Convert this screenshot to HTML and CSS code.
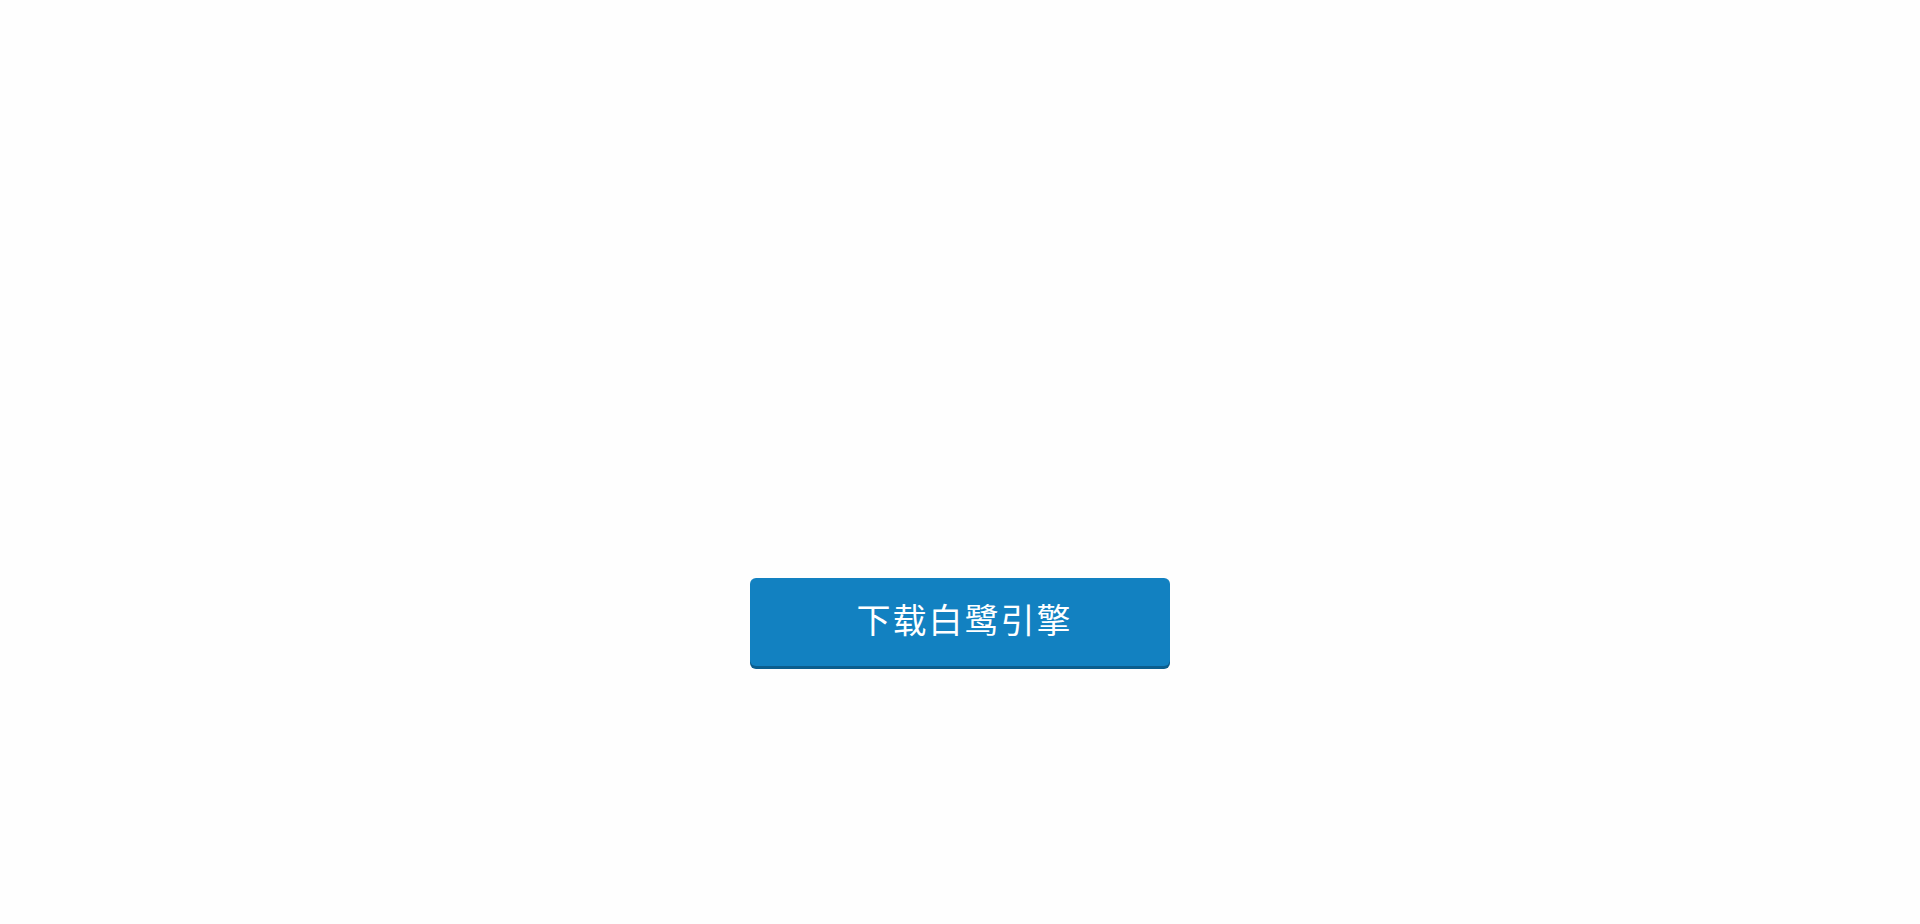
FILE: index.html
```html
<!DOCTYPE html>
<html lang="zh-CN">
<head>
<meta charset="utf-8">
<title>下载白鹭引擎</title>
<link rel="stylesheet" href="styles.css">
</head>
<body>
<main class="page">
  <a class="download-btn" href="#">下载白鹭引擎</a>
</main>
</body>
</html>
```

FILE: styles.css
```css
html, body {
  margin: 0;
  padding: 0;
  background: #fefefe;
}
.page {
  height: 924px;
  display: flex;
  flex-direction: column;
  align-items: center;
  padding-top: 578px;
  box-sizing: border-box;
}
.download-btn {
  display: flex;
  align-items: center;
  justify-content: center;
  width: 420px;
  height: 88px;
  background: #1281c1;
  border-radius: 6px;
  box-shadow: 0 3px 0 #0b5e8e;
  color: #ffffff;
  text-decoration: none;
  font-family: "Noto Sans CJK SC", "Noto Sans", sans-serif;
  font-size: 34px;
  font-weight: 400;
  line-height: 1;
  letter-spacing: 2px;
  padding-left: 9px;
  padding-bottom: 6px;
  box-sizing: border-box;
}
```
